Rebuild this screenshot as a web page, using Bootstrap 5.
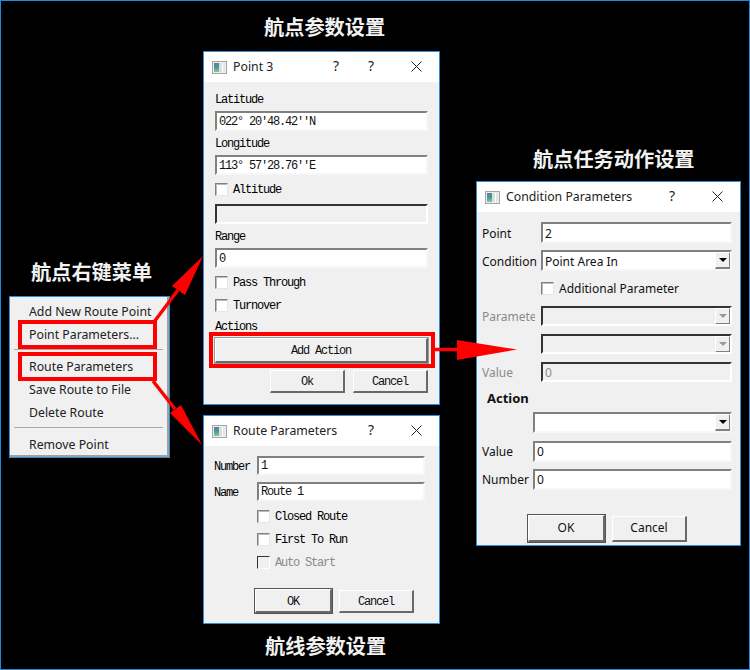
<!DOCTYPE html>
<html lang="zh">
<head>
<meta charset="utf-8">
<title>Route point dialogs</title>
<link href="https://cdn.jsdelivr.net/npm/bootstrap@5.3.0/dist/css/bootstrap.min.css" rel="stylesheet">
<style>
html,body{width:750px;height:670px;margin:0;overflow:hidden;background:#000}
.desktop{position:relative;width:750px;height:670px;background:#000;box-shadow:inset 0 0 0 1px #1e88e5;font-family:"Noto Sans","Noto Sans CJK SC",sans-serif;font-size:12px;color:#111}
.head-cn{position:absolute;color:#f2f2f2;font-family:"Noto Sans CJK SC",sans-serif;font-weight:700;font-size:20.2px;line-height:24px;white-space:nowrap;margin:0}
.head-a{left:264px;top:15px}.head-b{left:31px;top:260px}.head-c{left:533px;top:147px}.head-d{left:265px;top:634px}
.qwin{position:absolute;background:#f0f0f0;border:1px solid #2e8bd6;display:flex;flex-direction:column}
.win-point{left:203px;top:51px;width:237px;height:354px}
.win-route{left:203px;top:415px;width:237px;height:209px}
.win-cond{left:476px;top:181px;width:265px;height:365px}
.qtitle{height:30px;flex:none;background:#fff;display:flex;align-items:center;padding-left:8px;font-size:12.3px;color:#222}
.qtitle svg.wicon{margin-right:6px;flex:none}
.qhelp{position:absolute;top:4px;line-height:20px;font-size:14px;color:#222}
.qclose{position:absolute;top:9px}
.qbody{padding:0 11px;flex:1}
.sim{font-family:"Liberation Mono","Noto Sans CJK SC",monospace;font-size:12px;letter-spacing:-1.2px;color:#000}
.qlabel{line-height:16px;height:14px;white-space:nowrap}
.form-control.qinput{display:block;height:20px;min-height:0;padding:0 2px;border-radius:0;border-width:2px;border-style:solid;border-color:#808080 #f7f7f7 #f7f7f7 #808080;background:#fff;line-height:16px;font:inherit;letter-spacing:inherit;color:#111;box-shadow:none}
.sim .form-control.qinput,.form-control.qinput.shift{padding-top:1px}
.form-control.qinput:disabled{background:#f0f0f0;border-color:#333 #fff #fff #333;color:#8a8a8a;opacity:1}
.form-check-input.qcheck{width:13px;height:13px;margin:0;flex:none;border-radius:0;border-width:1px;border-style:solid;border-color:#808080 #e6e6e6 #e6e6e6 #808080;background:#fff;box-shadow:inset 1px 1px 0 #bbb;opacity:1}
.form-check-input.qcheck:disabled{background:#f0f0f0;border-color:#333 #fff #fff #333;box-shadow:none;opacity:1}
.qcheckrow{display:flex;align-items:flex-start;gap:5px;height:14px;line-height:16px}
.qcheckrow .qcheck{margin-top:1px}
.qcheckrow.off{color:#8a8a8a}
.btn.qbtn{padding:0;border-radius:0;background:#f0f0f0;color:#111;font:inherit;letter-spacing:inherit;border-width:1px 2px 2px 1px;border-style:solid;border-color:#fff #696969 #696969 #fff;display:flex;align-items:center;justify-content:center}
.sim .btn.qbtn{padding-top:2px}
.btn.qbtn.dflt{box-shadow:0 0 0 1px #555}
.btn.qbtn.wide{box-shadow:0 0 0 1px #999}
.qcombo{display:flex;align-items:center;height:21px;background:#fff;border-width:2px;border-style:solid;border-color:#808080 #f7f7f7 #f7f7f7 #808080;padding-left:2px;overflow:hidden}
.qcombo.off{background:#f0f0f0;border-color:#333 #fff #fff #333;height:20px}
.qcombo span{flex:1;padding-top:2px;line-height:15px}
.qarrow{width:16px;height:17px;flex:none;background:#f0f0f0;border-width:1px 2px 2px 1px;border-style:solid;border-color:#fff #808080 #808080 #fff;display:flex;align-items:center;justify-content:center;margin-right:-1px}
.qarrow i{display:block;width:0;height:0;border-left:4px solid transparent;border-right:4px solid transparent;border-top:4px solid #000}
.off .qarrow i{border-top-color:#999}
.dropdown-menu.qmenu{display:block;position:absolute;z-index:1;left:9px;top:296px;width:161px;height:162px;min-width:0;padding:3px 0 0;margin:0;border-radius:0;background:#f0f0f0;border:1px solid #2e8bd6;box-shadow:inset -2px -2px 0 #a0a0a0;font-size:12.3px;color:#222}
.dropdown-item.qitem{height:23px;line-height:23px;padding:0 0 0 19px;color:#222;white-space:nowrap}
.dropdown-divider.qsep{margin:3px 6px 5px 4px;border-top:1px solid #a8a8a8;opacity:1}
.redbox{position:absolute;z-index:2;border:4px solid #f00}
.rb1{left:18px;top:320px;width:139px;height:29px}
.rb2{left:18px;top:352px;width:139px;height:29px}
.rb3{left:209px;top:332px;width:226px;height:36px}
.arrows{position:absolute;z-index:2;left:0;top:0;pointer-events:none}
.lbl43{width:43px;flex:none;padding-top:2px;line-height:14px}
.lbl59{width:59px;flex:none;white-space:nowrap;padding-top:2px}
.lbl51{width:51px;flex:none;white-space:nowrap}
.clip53{width:53px;overflow:hidden}
.dim{color:#8a8a8a}
.actiontitle{font-weight:700;font-size:13px;line-height:16px;padding-left:5px}
.cond .qinput{height:21px}
.route-body{padding:0 14px 0 10px}
.cond-body{padding:0 8px 0 5px}
.checkoff43{margin-left:43px}
.checkoff59{margin-left:59px}
.btnrow-route{margin-left:41px;gap:7px;align-items:center}
.btnrow-cond{margin-left:46px;gap:7px;align-items:center}
.b75-23{width:75px;height:23px}.b77-24{width:77px;height:24px}.b77-27{width:77px;height:27px}.b75-26{width:75px;height:26px}.b100-25{height:25px}
.h19.form-control.qinput{height:19px}.h20.form-control.qinput{height:20px}
.m5{margin-top:5px}.m7{margin-top:7px}.m8{margin-top:8px}.m9{margin-top:9px}.m10{margin-top:10px}.m11{margin-top:11px}.m6{margin-top:6px}.m20{margin-top:20px}.m25{margin-top:25px}
.ca{left:129px}.cb{left:164px}.cc{left:207px}.cd{left:192px}.ce{left:235px}
</style>
</head>
<body>
<div class="desktop">
  <svg width="0" height="0" class="d-block position-absolute">
    <defs>
      <linearGradient id="wg" x1="0" y1="0" x2="0" y2="1"><stop offset="0" stop-color="#5f7f9a"/><stop offset=".5" stop-color="#4a9a94"/><stop offset="1" stop-color="#8cc8a0"/></linearGradient>
      <symbol id="wicon" viewBox="0 0 15 13">
        <rect x=".5" y=".5" width="14" height="12" fill="#eee" stroke="#a5a5a5"/>
        <rect x="2" y="2" width="5" height="9" fill="url(#wg)"/>
        <rect x="7" y="2" width="3" height="9" fill="#d5e2e0"/>
        <rect x="10" y="2" width="1" height="9" fill="#fff"/>
        <rect x="11" y="2" width="2" height="9" fill="#e4e4e4"/>
      </symbol>
      <symbol id="xicon" viewBox="0 0 11 11">
        <path d="M.5.5l10 10M10.5.5l-10 10" stroke="#222" stroke-width="1" fill="none"/>
      </symbol>
    </defs>
  </svg>

  <h2 class="head-cn head-a">航点参数设置</h2>
  <h2 class="head-cn head-b">航点右键菜单</h2>
  <h2 class="head-cn head-c">航点任务动作设置</h2>
  <h2 class="head-cn head-d">航线参数设置</h2>

  <div class="dropdown-menu show qmenu">
    <a class="dropdown-item qitem">Add New Route Point</a>
    <a class="dropdown-item qitem">Point Parameters...</a>
    <hr class="dropdown-divider qsep">
    <a class="dropdown-item qitem">Route Parameters</a>
    <a class="dropdown-item qitem">Save Route to File</a>
    <a class="dropdown-item qitem">Delete Route</a>
    <hr class="dropdown-divider qsep">
    <a class="dropdown-item qitem">Remove Point</a>
  </div>

  <div class="qwin win-point">
    <div class="qtitle"><svg class="wicon" width="15" height="13"><use href="#wicon"/></svg>Point 3</div>
    <span class="qhelp ca">?</span><span class="qhelp cb">?</span>
    <svg class="qclose cc" width="11" height="11"><use href="#xicon"/></svg>
    <div class="qbody sim">
      <div class="qlabel m10">Latitude</div>
      <input class="form-control qinput m5" value="022° 20′48.42′′N">
      <div class="qlabel m5">Longitude</div>
      <input class="form-control qinput m5" value="113° 57′28.76′′E">
      <div class="qcheckrow m7"><input type="checkbox" class="form-check-input qcheck">Altitude</div>
      <input class="form-control qinput m8" disabled>
      <div class="qlabel m5">Range</div>
      <input class="form-control qinput m5" value="0">
      <div class="qcheckrow m7"><input type="checkbox" class="form-check-input qcheck">Pass Through</div>
      <div class="qcheckrow m9"><input type="checkbox" class="form-check-input qcheck">Turnover</div>
      <div class="qlabel m7">Actions</div>
      <button class="btn qbtn wide w-100 m5 b100-25">Add Action</button>
      <div class="d-flex justify-content-end gap-2 m7">
        <button class="btn qbtn b75-23">Ok</button>
        <button class="btn qbtn b75-23">Cancel</button>
      </div>
    </div>
  </div>

  <div class="qwin win-route">
    <div class="qtitle"><svg class="wicon" width="15" height="13"><use href="#wicon"/></svg>Route Parameters</div>
    <span class="qhelp cb">?</span>
    <svg class="qclose cc" width="11" height="11"><use href="#xicon"/></svg>
    <div class="sim route-body flex-fill">
      <div class="d-flex align-items-center m10"><div class="lbl43">Number</div><input class="form-control qinput h19" value="1"></div>
      <div class="d-flex align-items-center m7"><div class="lbl43">Name</div><input class="form-control qinput h19" value="Route 1"></div>
      <div class="qcheckrow m8 checkoff43"><input type="checkbox" class="form-check-input qcheck">Closed Route</div>
      <div class="qcheckrow m9 checkoff43"><input type="checkbox" class="form-check-input qcheck">First To Run</div>
      <div class="qcheckrow off m9 checkoff43"><input type="checkbox" class="form-check-input qcheck" disabled>Auto Start</div>
      <div class="d-flex m20 btnrow-route">
        <button class="btn qbtn dflt b77-24">OK</button>
        <button class="btn qbtn b75-23">Cancel</button>
      </div>
    </div>
  </div>

  <div class="qwin win-cond">
    <div class="qtitle"><svg class="wicon" width="15" height="13"><use href="#wicon"/></svg>Condition Parameters</div>
    <span class="qhelp cd">?</span>
    <svg class="qclose ce" width="11" height="11"><use href="#xicon"/></svg>
    <div class="cond cond-body flex-fill">
      <div class="d-flex align-items-center m10"><div class="lbl59">Point</div><input class="form-control qinput shift" value="2"></div>
      <div class="d-flex align-items-center m7"><div class="lbl59">Condition</div><div class="qcombo flex-fill"><span>Point Area In</span><div class="qarrow"><i></i></div></div></div>
      <div class="qcheckrow m10 checkoff59"><input type="checkbox" class="form-check-input qcheck">Additional Parameter</div>
      <div class="d-flex align-items-center m11"><div class="lbl59"><div class="clip53 dim">Parameter</div></div><div class="qcombo off flex-fill"><span></span><div class="qarrow"><i></i></div></div></div>
      <div class="d-flex align-items-center m8"><div class="lbl59"></div><div class="qcombo off flex-fill"><span></span><div class="qarrow"><i></i></div></div></div>
      <div class="d-flex align-items-center m8"><div class="lbl59 dim">Value</div><input class="form-control qinput h20 shift" disabled value="0"></div>
      <div class="actiontitle m8">Action</div>
      <div class="d-flex align-items-center m6"><div class="lbl51"></div><div class="qcombo flex-fill"><span></span><div class="qarrow"><i></i></div></div></div>
      <div class="d-flex align-items-center m8"><div class="lbl51">Value</div><input class="form-control qinput" value="0"></div>
      <div class="d-flex align-items-center m7"><div class="lbl51">Number</div><input class="form-control qinput" value="0"></div>
      <div class="d-flex m25 btnrow-cond">
        <button class="btn qbtn dflt b77-27">OK</button>
        <button class="btn qbtn b75-26">Cancel</button>
      </div>
    </div>
  </div>

  <div class="redbox rb1"></div>
  <div class="redbox rb2"></div>
  <div class="redbox rb3"></div>
  <svg class="arrows" width="750" height="670" viewBox="0 0 750 670">
    <path d="M154 322 178 290" stroke="#f00" stroke-width="3.5" fill="none"/>
    <polygon points="203,256 172,286 185,295" fill="#f00"/>
    <path d="M153 381 175 409" stroke="#f00" stroke-width="3.5" fill="none"/>
    <polygon points="202,445 170,413 181,405" fill="#f00"/>
    <path d="M433 349.5H458" stroke="#f00" stroke-width="3.5" fill="none"/>
    <polygon points="517,349.5 457,340 457,360" fill="#f00"/>
  </svg>
</div>
<script src="https://cdn.jsdelivr.net/npm/bootstrap@5.3.0/dist/js/bootstrap.bundle.min.js"></script>
</body>
</html>
